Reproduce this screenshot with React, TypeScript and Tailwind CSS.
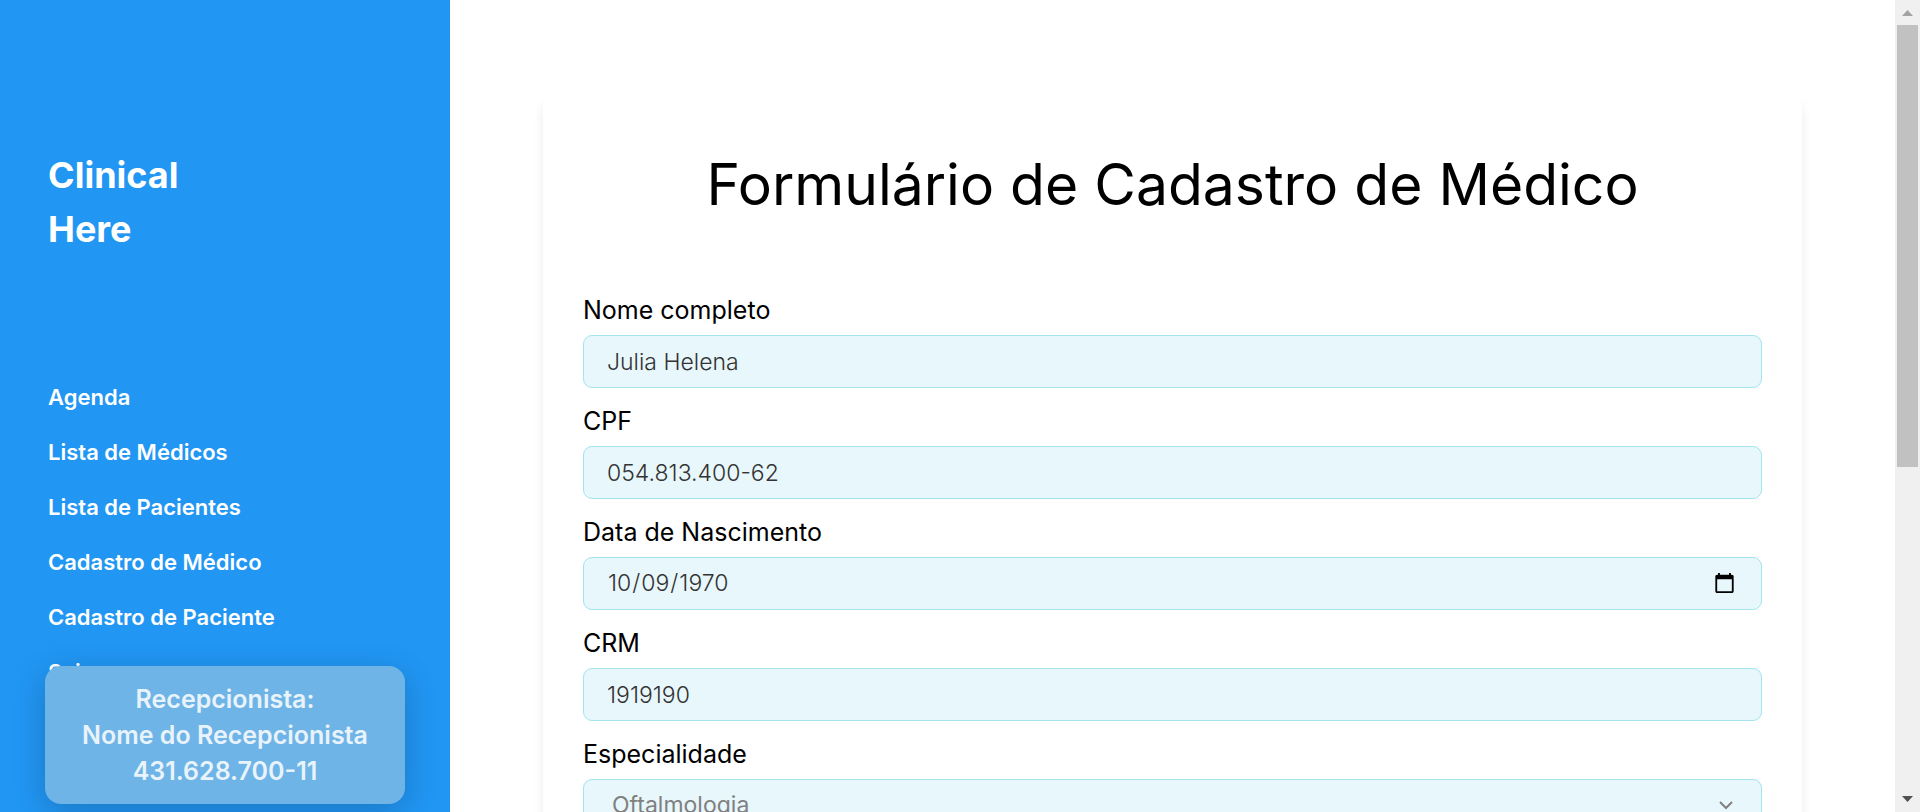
import React, { useId } from "react";

const navItems = [
  "Agenda",
  "Lista de Médicos",
  "Lista de Pacientes",
  "Cadastro de Médico",
  "Cadastro de Paciente",
  "Sair",
];

const labelClass = "block pb-[5px] text-[25px] leading-10 text-black";

const controlClass =
  "block h-[53px] w-full rounded-[9px] border border-[#a3e4ee] bg-[#e8f7fb] px-[23px] text-[23px] font-light text-[#333333] outline-none";

function Field({
  label,
  type = "text",
  value,
}: {
  label: string;
  type?: string;
  value: string;
}) {
  const id = useId();
  return (
    <div>
      <label htmlFor={id} className={labelClass}>
        {label}
      </label>
      <input id={id} type={type} defaultValue={value} className={controlClass} />
    </div>
  );
}

function SpecialtyField() {
  const id = useId();
  return (
    <div>
      <label htmlFor={id} className={labelClass}>
        Especialidade
      </label>
      <div className="relative">
        <select
          id={id}
          defaultValue="Oftalmologia"
          className="block h-[53px] w-full appearance-none rounded-[9px] border border-[#a3e4ee] bg-[#e8f7fb] px-7 text-[23px] text-[#808080] outline-none"
        >
          <option>Oftalmologia</option>
          <option>Cardiologia</option>
          <option>Pediatria</option>
        </select>
        <svg
          viewBox="0 0 14 9"
          className="pointer-events-none absolute top-[22px] right-[29px] h-[9px] w-[14px]"
          fill="none"
          stroke="#808080"
          strokeWidth="2"
          aria-hidden="true"
        >
          <path d="M1 1l6 6 6-6" />
        </svg>
      </div>
    </div>
  );
}

function Sidebar() {
  return (
    <aside className="relative w-[450px] shrink-0 bg-[#2196f3] px-12 pt-[148px] text-white">
      <h1 className="text-[36px] leading-[54px] font-bold">
        Clinical
        <br />
        Here
      </h1>
      <nav className="pt-[125px]">
        <ul className="flex flex-col gap-[22px]">
          {navItems.map((item) => (
            <li key={item}>
              <a href="#" className="block text-[22px] leading-[33px] font-semibold">
                {item}
              </a>
            </li>
          ))}
        </ul>
      </nav>
      <div className="absolute inset-x-[45px] bottom-2 rounded-2xl bg-[#6fb4e6] py-[15px] text-center text-[25px] leading-9 font-semibold text-[#e8f3fb] shadow-[0_8px_32px_rgba(0,0,0,0.2)]">
        <p>Recepcionista:</p>
        <p>Nome do Recepcionista</p>
        <p>431.628.700-11</p>
      </div>
    </aside>
  );
}

function ScrollTrack() {
  return (
    <div className="flex w-[25px] shrink-0 flex-col items-center bg-[#f0f0f0]" aria-hidden="true">
      <svg viewBox="0 0 25 25" className="h-[25px] w-[25px] shrink-0">
        <path d="M7 16l5.5-6 5.5 6z" fill="#a3a3a3" />
      </svg>
      <div className="h-[442px] w-[21px] bg-[#c1c1c1]" />
      <svg viewBox="0 0 25 25" className="mt-auto h-[25px] w-[25px] shrink-0">
        <path d="M7 9l5.5 6 5.5-6z" fill="#505050" />
      </svg>
    </div>
  );
}

export default function App() {
  return (
    <div className="flex h-screen overflow-hidden bg-white font-['Inter',sans-serif]">
      <Sidebar />
      <main className="min-w-0 flex-1 overflow-hidden px-[93px] pt-[90px]">
        <form className="rounded-2xl bg-white px-10 pt-[53px] pb-10 shadow-[0_10px_12px_rgba(0,0,0,0.08)]">
          <h2 className="pb-[63px] text-center text-[57px] leading-[84px] text-black">
            Formulário de Cadastro de Médico
          </h2>
          <div className="flex flex-col gap-[13px]">
            <Field label="Nome completo" value="Julia Helena" />
            <Field label="CPF" value="054.813.400-62" />
            <Field label="Data de Nascimento" type="date" value="1970-10-09" />
            <Field label="CRM" value="1919190" />
            <SpecialtyField />
          </div>
        </form>
      </main>
      <ScrollTrack />
    </div>
  );
}
